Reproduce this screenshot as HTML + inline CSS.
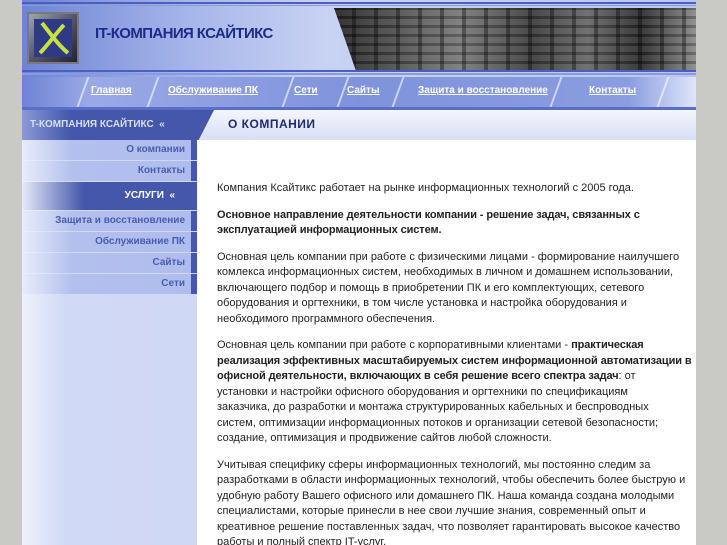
<!DOCTYPE html>
<html><head><meta charset="utf-8"><style>
*{margin:0;padding:0;box-sizing:border-box}
body{width:727px;height:545px;overflow:hidden;background:#c9c9c5;font-family:"Liberation Sans",Arial,sans-serif;position:relative}
#wrap{position:absolute;left:22px;top:0;width:674px;height:545px;background:#fff;overflow:hidden}
.a{position:absolute}
#hdr{left:0;top:0;width:674px;height:77px;background:linear-gradient(90deg,#6e84d4 0%,#a7b6ea 25%,#c8d2f2 45%,#b9c6ee 100%)}
.ln{left:0;width:674px;background:#4a5fc0}
#img{left:312px;top:8px;width:362px;height:62px;background:
repeating-linear-gradient(90deg,rgba(0,0,0,0) 0 18px,rgba(0,0,0,.35) 18px 22px),
repeating-linear-gradient(0deg,rgba(255,255,255,.08) 0 6px,rgba(0,0,0,.2) 6px 9px),
linear-gradient(90deg,#222 0%,#555 20%,#777 35%,#3a3a3a 55%,#666 70%,#2a2a2a 85%,#888 100%);
clip-path:polygon(0 0,100% 0,100% 100%,6% 100%)}
#logo{left:5px;top:12px;width:52px;height:52px;background:linear-gradient(135deg,#9aa 0%,#556 50%,#223 100%);border:2px solid #778}
#logo div{position:absolute;left:5px;top:5px;width:38px;height:38px;background:#2e3a86}
#nav{left:0;top:77px;width:674px;height:30px;background:linear-gradient(90deg,#6f83d6 0%,#9aa9e6 10%,#7f93dc 50%,#8a9de0 90%,#dfe5fa 100%)}
#nav a{position:absolute;top:8px;font-size:10px;font-weight:bold;color:#fff;text-decoration:underline}
.sl{position:absolute;top:0;width:2px;height:30px;background:rgba(255,255,255,.6);transform:skewX(-20deg)}
#tb{left:0;top:110px;width:674px;height:30px;background:linear-gradient(180deg,#f4f6fd,#d7def6)}
#tbl{left:0;top:110px;width:192px;height:30px;background:linear-gradient(90deg,#8a9ad8 0%,#4457aa 25%,#4457aa 100%);clip-path:polygon(0 0,100% 0,92% 100%,0 100%);color:#d8def8;font-size:10px;font-weight:bold;padding:9px 0 0 8px}
#side{left:0;top:140px;width:175px;height:405px;background:linear-gradient(90deg,#eef1fc 0%,#d0d9f5 25%,#cfd8f5 100%)}
.it{position:absolute;left:0;width:169px;height:20px;background:linear-gradient(90deg,#e8ecfb 0%,#b3c0ee 30%,#afbdee 100%);color:#4a5cb0;font-size:10px;font-weight:bold;text-align:right;padding:4px 6px 0 0}
.st{position:absolute;left:169px;width:6px;height:20px;background:#4457aa}
.hd{position:absolute;left:0;width:175px;height:28px;background:linear-gradient(90deg,#e6eafb 0%,#4457aa 35%,#4457aa 100%);color:#fff;font-size:10px;font-weight:bold;text-align:right;padding:8px 22px 0 0}
#txt{left:195px;top:181px;width:480px;font-size:11px;line-height:15.5px;color:#222;white-space:nowrap}
#txt p{margin-bottom:11px}
#txt b{letter-spacing:-0.1px}
</style></head><body>
<div id="wrap">
<div class="a" id="hdr"></div>
<div class="a ln" style="top:2px;height:2px"></div>
<div class="a ln" style="top:5px;height:1px;background:#8a9ae0"></div>
<div class="a" id="img"></div>
<div class="a ln" style="top:70px;height:2px"></div>
<div class="a ln" style="top:73px;height:2px;background:#8a9ae0"></div>
<div class="a" id="logo"><div></div>
<svg class="a" style="left:7px;top:5px" width="36" height="38" viewBox="0 0 36 38"><path d="M6 4 C14 14 22 26 32 34" stroke="#c8e040" stroke-width="4" fill="none"/><path d="M28 6 C20 14 12 26 4 34" stroke="#c8e040" stroke-width="4" fill="none"/></svg></div>
<div class="a" style="left:73px;top:25px;font-size:15px;font-weight:bold;color:#1d2a8a;letter-spacing:-.6px">IT-КОМПАНИЯ КСАЙТИКС</div>
<div class="a" id="nav">
<span class="sl" style="left:60px"></span><span class="sl" style="left:130px"></span><span class="sl" style="left:265px"></span><span class="sl" style="left:320px"></span><span class="sl" style="left:375px"></span><span class="sl" style="left:533px"></span><span class="sl" style="left:640px"></span>
<a style="left:69px">Главная</a><a style="left:146px">Обслуживание ПК</a><a style="left:272px">Сети</a><a style="left:325px">Сайты</a><a style="left:396px">Защита и восстановление</a><a style="left:567px">Контакты</a>
</div>
<div class="a ln" style="top:107px;height:3px;background:#5a6ec8"></div>
<div class="a" id="tb"></div>
<div class="a" id="tbl">T-КОМПАНИЯ КСАЙТИКС &nbsp;«</div>
<div class="a" style="left:206px;top:117px;font-size:12px;font-weight:bold;color:#1d2a7a;letter-spacing:.5px">О КОМПАНИИ</div>
<div class="a" id="side">
<div class="it" style="top:0">О компании</div><div class="st" style="top:0"></div>
<div class="it" style="top:21px">Контакты</div><div class="st" style="top:21px"></div>
<div class="hd" style="top:42px">УСЛУГИ &nbsp;«</div>
<div class="it" style="top:71px">Защита и восстановление</div><div class="st" style="top:71px"></div>
<div class="it" style="top:92px">Обслуживание ПК</div><div class="st" style="top:92px"></div>
<div class="it" style="top:113px">Сайты</div><div class="st" style="top:113px"></div>
<div class="it" style="top:134px">Сети</div><div class="st" style="top:134px"></div>
</div>
<div class="a" id="txt">
<p>Компания Ксайтикс работает на рынке информационных технологий с 2005 года.</p>
<p><b>Основное направление деятельности компании - решение задач, связанных с<br>эксплуатацией информационных систем.</b></p>
<p>Основная цель компании при работе с физическими лицами - формирование наилучшего<br>комлекса информационных систем, необходимых в личном и домашнем использовании,<br>включающего подбор и помощь в приобретении ПК и его комплектующих, сетевого<br>оборудования и оргтехники, в том числе установка и настройка оборудования и<br>необходимого программного обеспечения.</p>
<p>Основная цель компании при работе с корпоративными клиентами - <b>практическая<br>реализация эффективных масштабируемых систем информационной автоматизации в<br>офисной деятельности, включающих в себя решение всего спектра задач</b>: от<br>установки и настройки офисного оборудования и оргтехники по спецификациям<br>заказчика, до разработки и монтажа структурированных кабельных и беспроводных<br>систем, оптимизации информационных потоков и организации сетевой безопасности;<br>создание, оптимизация и продвижение сайтов любой сложности.</p>
<p>Учитывая специфику сферы информационных технологий, мы постоянно следим за<br>разработками в области информационных технологий, чтобы обеспечить более быструю и<br>удобную работу Вашего офисного или домашнего ПК. Наша команда создана молодыми<br>специалистами, которые принесли в нее свои лучшие знания, современный опыт и<br>креативное решение поставленных задач, что позволяет гарантировать высокое качество<br>работы и полный спектр IT-услуг.</p>
</div>
</div>
</body></html>
